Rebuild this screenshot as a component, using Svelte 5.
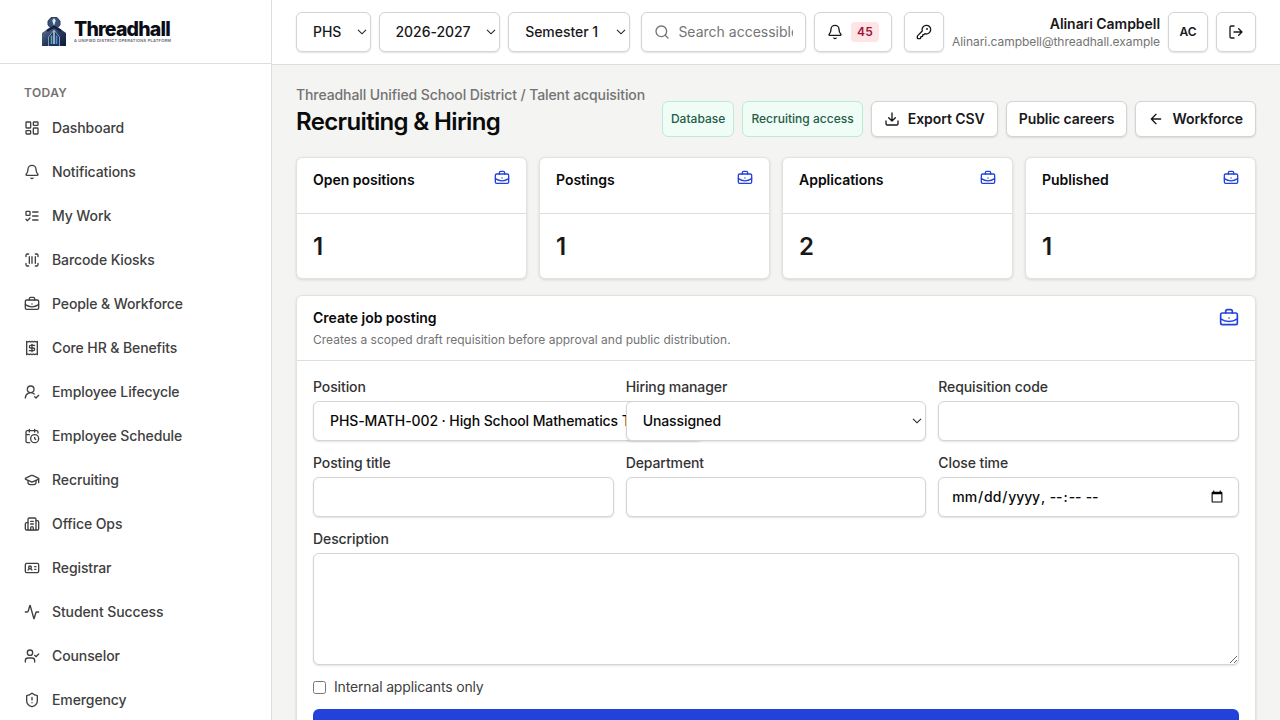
<script>
  const icons = {
    dashboard: '<rect width="7" height="9" x="3" y="3" rx="1"/><rect width="7" height="5" x="14" y="3" rx="1"/><rect width="7" height="9" x="14" y="12" rx="1"/><rect width="7" height="5" x="3" y="16" rx="1"/>',
    bell: '<path d="M10.268 21a2 2 0 0 0 3.464 0"/><path d="M3.262 15.326A1 1 0 0 0 4 17h16a1 1 0 0 0 .74-1.673C19.41 13.956 18 12.499 18 8A6 6 0 0 0 6 8c0 4.499-1.411 5.956-2.738 7.326"/>',
    todo: '<rect x="3" y="5" width="6" height="6" rx="1"/><path d="m3 17 2 2 4-4M13 6h8M13 12h8M13 18h8"/>',
    barcode: '<path d="M3 7V5a2 2 0 0 1 2-2h2M17 3h2a2 2 0 0 1 2 2v2M21 17v2a2 2 0 0 1-2 2h-2M7 21H5a2 2 0 0 1-2-2v-2M8 7v10M12 7v10M17 7v10"/>',
    briefcase: '<path d="M12 12h.01"/><path d="M16 6V4a2 2 0 0 0-2-2h-4a2 2 0 0 0-2 2v2"/><path d="M22 13a18.15 18.15 0 0 1-20 0"/><rect width="20" height="14" x="2" y="6" rx="2"/>',
    receipt: '<path d="M4 2v20l2-1 2 1 2-1 2 1 2-1 2 1 2-1 2 1V2l-2 1-2-1-2 1-2-1-2 1-2-1-2 1Z"/><path d="M16 8h-6a2 2 0 1 0 0 4h4a2 2 0 1 1 0 4H8"/><path d="M12 17.5v-11"/>',
    userRoundCheck: '<path d="M2 21a8 8 0 0 1 13.292-6"/><circle cx="10" cy="8" r="5"/><path d="m16 19 2 2 4-4"/>',
    calendarClock: '<path d="M16 14v2.2l1.6 1M16 2v4M21 7.5V6a2 2 0 0 0-2-2H5a2 2 0 0 0-2 2v14a2 2 0 0 0 2 2h3.5M3 10h5M8 2v4"/><circle cx="16" cy="16" r="6"/>',
    graduation: '<path d="M21.42 10.922a1 1 0 0 0-.019-1.838L12.83 5.18a2 2 0 0 0-1.66 0L2.6 9.08a1 1 0 0 0 0 1.832l8.57 3.908a2 2 0 0 0 1.66 0z"/><path d="M22 10v6M6 12.5V16a6 3 0 0 0 12 0v-3.5"/>',
    building: '<path d="M10 12h4M10 8h4M14 21v-3a2 2 0 0 0-4 0v3"/><path d="M6 10H4a2 2 0 0 0-2 2v7a2 2 0 0 0 2 2h16a2 2 0 0 0 2-2V9a2 2 0 0 0-2-2h-2"/><path d="M6 21V5a2 2 0 0 1 2-2h8a2 2 0 0 1 2 2v16"/>',
    idCard: '<path d="M16 10h2M16 14h2M6.17 15a3 3 0 0 1 5.66 0"/><circle cx="9" cy="11" r="2"/><rect x="2" y="5" width="20" height="14" rx="2"/>',
    activity: '<path d="M22 12h-2.48a2 2 0 0 0-1.93 1.46l-2.35 8.36a.25.25 0 0 1-.48 0L9.24 2.18a.25.25 0 0 0-.48 0l-2.35 8.36A2 2 0 0 1 4.49 12H2"/>',
    userCheck: '<path d="m16 11 2 2 4-4"/><path d="M16 21v-2a4 4 0 0 0-4-4H6a4 4 0 0 0-4 4v2"/><circle cx="9" cy="7" r="4"/>',
    shield: '<path d="M20 13c0 5-3.5 7.5-7.66 8.95a1 1 0 0 1-.67-.01C7.5 20.5 4 18 4 13V6a1 1 0 0 1 1-1c2 0 4.5-1.2 6.24-2.72a1.17 1.17 0 0 1 1.52 0C14.51 3.81 17 5 19 5a1 1 0 0 1 1 1z"/><path d="M12 8v4M12 16h.01"/>',
    search: '<circle cx="11" cy="11" r="8"/><path d="m21 21-4.34-4.34"/>',
    key: '<path d="M2.586 17.414A2 2 0 0 0 2 18.828V21a1 1 0 0 0 1 1h3a1 1 0 0 0 1-1v-1a1 1 0 0 1 1-1h1a1 1 0 0 0 1-1v-1a1 1 0 0 1 1-1h.172a2 2 0 0 0 1.414-.586l.814-.814a6.5 6.5 0 1 0-4-4z"/><circle cx="16.5" cy="7.5" r=".5" fill="currentColor"/>',
    logout: '<path d="m16 17 5-5-5-5M21 12H9M9 21H5a2 2 0 0 1-2-2V5a2 2 0 0 1 2-2h4"/>',
    download: '<path d="M12 15V3M21 15v4a2 2 0 0 1-2 2H5a2 2 0 0 1-2-2v-4M7 10l5 5 5-5"/>',
    arrowLeft: '<path d="m12 19-7-7 7-7M19 12H5"/>'
  };

  const navItems = [
    { label: 'Dashboard', icon: 'dashboard' },
    { label: 'Notifications', icon: 'bell' },
    { label: 'My Work', icon: 'todo' },
    { label: 'Barcode Kiosks', icon: 'barcode' },
    { label: 'People & Workforce', icon: 'briefcase' },
    { label: 'Core HR & Benefits', icon: 'receipt' },
    { label: 'Employee Lifecycle', icon: 'userRoundCheck' },
    { label: 'Employee Schedule', icon: 'calendarClock' },
    { label: 'Recruiting', icon: 'graduation' },
    { label: 'Office Ops', icon: 'building' },
    { label: 'Registrar', icon: 'idCard' },
    { label: 'Student Success', icon: 'activity' },
    { label: 'Counselor', icon: 'userCheck' },
    { label: 'Emergency', icon: 'shield' }
  ];

  const stats = [
    { label: 'Open positions', value: 1 },
    { label: 'Postings', value: 1 },
    { label: 'Applications', value: 2 },
    { label: 'Published', value: 1 }
  ];

  let internalOnly = $state(false);
</script>

{#snippet icon(name, size = 16)}
  <svg class="icon" width={size} height={size} viewBox="0 0 24 24" fill="none" stroke="currentColor" stroke-width="2" stroke-linecap="round" stroke-linejoin="round" aria-hidden="true">
    {@html icons[name]}
  </svg>
{/snippet}

<div class="shell">
  <aside class="sidebar">
    <div class="brand">
      <svg class="mark" width="24" height="30" viewBox="0 0 24 30" aria-hidden="true">
        <defs>
          <linearGradient id="steel" x1="0" y1="0" x2="1" y2="1">
            <stop offset="0" stop-color="#5d7699" />
            <stop offset="0.5" stop-color="#26395e" />
            <stop offset="1" stop-color="#0f1a36" />
          </linearGradient>
        </defs>
        <path d="M0 29V16l7-5h10l7 5v13z" fill="url(#steel)" />
        <path d="M9 0.5h6l3 3.500v4l-3 3.500H9L6 8V4z" fill="#3d5175" stroke="#2a3c60" stroke-width="1" />
        <path d="M12 1l1.800 2.500L12 9l-1.800-5.500z" fill="#dfe6f1" />
        <path d="M5 14l7-4.500 7 4.500" fill="none" stroke="#15203c" stroke-width="2.200" />
        <path d="M6.500 29v-9L12 13l5.500 7v9" fill="#1b3563" stroke="#b9c7dd" stroke-width="0.7" />
        <path d="M9.500 18.500V27" stroke="#5fa89a" stroke-width="1.600" />
        <path d="M14.500 18.500V27" stroke="#4b8be0" stroke-width="1.600" />
        <path d="M12 14v13" stroke="#f2f6fc" stroke-width="1.200" />
      </svg>
      <div class="brand-text">
        <span class="brand-name">Threadhall</span>
        <span class="brand-tag">A UNIFIED DISTRICT OPERATIONS PLATFORM</span>
      </div>
    </div>
    <nav>
      <p class="nav-title">TODAY</p>
      {#each navItems as item}
        <a class="nav-item" href="#top">
          {@render icon(item.icon)}
          <span>{item.label}</span>
        </a>
      {/each}
    </nav>
  </aside>

  <div class="content">
    <header class="topbar">
      <select class="control school" aria-label="School"><option>PHS</option></select>
      <select class="control term" aria-label="Year"><option>2026-2027</option></select>
      <select class="control term" aria-label="Semester"><option>Semester 1</option></select>
      <label class="control search">
        {@render icon('search')}
        <input placeholder="Search accessible records" />
      </label>
      <button class="control alerts">
        {@render icon('bell')}
        <span class="count">45</span>
      </button>
      <button class="control square key" aria-label="Keys">{@render icon('key')}</button>
      <div class="user">
        <strong>Alinari Campbell</strong>
        <span>Alinari.campbell@threadhall.example</span>
      </div>
      <button class="control square initials">AC</button>
      <button class="control square" aria-label="Sign out">{@render icon('logout')}</button>
    </header>

    <main>
      <div class="page-head">
        <div class="titles">
          <p>Threadhall Unified School District / Talent acquisition</p>
          <h1>Recruiting &amp; Hiring</h1>
        </div>
        <div class="actions">
          <span class="badge">Database</span>
          <span class="badge">Recruiting access</span>
          <button class="btn">{@render icon('download')}Export CSV</button>
          <button class="btn">Public careers</button>
          <button class="btn">{@render icon('arrowLeft')}Workforce</button>
        </div>
      </div>

      <section class="stats">
        {#each stats as stat}
          <div class="card">
            <div class="stat-head">
              <h2>{stat.label}</h2>
              {@render icon('briefcase')}
            </div>
            <div class="stat-value">{stat.value}</div>
          </div>
        {/each}
      </section>

      <section class="card">
        <div class="card-head">
          <div>
            <h2>Create job posting</h2>
            <p>Creates a scoped draft requisition before approval and public distribution.</p>
          </div>
          {@render icon('briefcase', 20)}
        </div>
        <form>
          <div class="fields">
            <label class="field">
              Position
              <select class="control position"><option>PHS-MATH-002 · High School Mathematics Teacher</option></select>
            </label>
            <label class="field">
              Hiring manager
              <select class="control"><option>Unassigned</option></select>
            </label>
            <label class="field">
              Requisition code
              <input class="control" />
            </label>
            <label class="field">
              Posting title
              <input class="control" />
            </label>
            <label class="field">
              Department
              <input class="control" />
            </label>
            <label class="field">
              Close time
              <input class="control" type="datetime-local" />
            </label>
          </div>
          <label class="field">
            Description
            <textarea class="control"></textarea>
          </label>
          <label class="check">
            <input type="checkbox" bind:checked={internalOnly} />
            Internal applicants only
          </label>
          <button class="submit" type="button" aria-label="Create posting"></button>
        </form>
      </section>
    </main>
  </div>
</div>

<style>
  :global(body) {
    overflow: hidden;
  }
  .shell, .shell * {
    box-sizing: border-box;
  }
  .shell {
    display: flex;
    height: 720px;
    overflow: hidden;
    background: #f4f4f2;
    color: #18181b;
    font-family: Inter, "Liberation Sans", sans-serif;
    font-size: 14px;
    line-height: 20px;
    letter-spacing: -0.1px;
  }
  h1, h2, p {
    margin: 0;
  }
  button, input, select, textarea {
    font: inherit;
    color: inherit;
    letter-spacing: inherit;
  }
  .icon {
    flex-shrink: 0;
    display: block;
  }

  .sidebar {
    width: 272px;
    flex-shrink: 0;
    background: #fff;
    border-right: 1px solid #dededc;
  }
  .brand {
    display: flex;
    gap: 8px;
    height: 64px;
    padding: 17px 0 0 42px;
    border-bottom: 1px solid #dededc;
  }
  .brand-text {
    display: flex;
    flex-direction: column;
    padding-top: 3px;
  }
  .brand-name {
    font-size: 19.5px;
    font-weight: 800;
    line-height: 18px;
    letter-spacing: -0.8px;
    color: #0a0d18;
  }
  .brand-tag {
    font-size: 4px;
    line-height: 5px;
    font-weight: 600;
    letter-spacing: 0.22px;
    white-space: nowrap;
    color: #5f6470;
  }
  nav {
    padding: 21px 12px;
  }
  .nav-title {
    height: 16px;
    padding: 0 12px;
    margin-bottom: 7px;
    font-size: 12px;
    line-height: 16px;
    font-weight: 600;
    letter-spacing: 0.4px;
    color: #737373;
  }
  .nav-item {
    display: flex;
    align-items: center;
    gap: 12px;
    height: 40px;
    margin-bottom: 4px;
    padding: 0 12px;
    font-weight: 500;
    color: #404040;
    text-decoration: none;
  }

  .content {
    flex: 1;
    min-width: 0;
  }
  .topbar {
    display: flex;
    align-items: center;
    height: 65px;
    padding: 0 24px;
    gap: 8px;
    background: #fff;
    border-bottom: 1px solid #dededc;
  }
  .control {
    height: 40px;
    padding: 0 12px;
    border: 1px solid #d4d4d4;
    border-radius: 6px;
    background-color: #fff;
    box-shadow: 0 1px 2px rgba(0, 0, 0, 0.12);
    font-weight: 500;
    flex-shrink: 0;
  }
  select.control {
    appearance: none;
    padding: 0 16px;
    background-image: url("data:image/svg+xml,%3Csvg xmlns='http://www.w3.org/2000/svg' width='10' height='6' fill='none' stroke='%23222' stroke-width='1.1'%3E%3Cpath d='M1 .8l4 4 4-4'/%3E%3C/svg%3E");
    background-repeat: no-repeat;
    background-position: right 3px center;
  }
  .school {
    width: 74.5px;
  }
  .term {
    width: 121.7px;
    letter-spacing: -0.05px;
  }
  .search {
    display: flex;
    align-items: center;
    gap: 8px;
    width: 164.5px;
    margin-left: 3.5px;
    color: #737373;
    letter-spacing: 0;
  }
  .search input {
    width: 100%;
    min-width: 0;
    padding: 0;
    border: 0;
    outline: 0;
    font-weight: 400;
    background: transparent;
  }
  .search input::placeholder {
    color: #757575;
  }
  .alerts {
    display: flex;
    align-items: center;
    gap: 8px;
    width: 78px;
  }
  .count {
    padding: 2px 6px;
    border-radius: 4px;
    background: #ffe4e6;
    color: #9f1239;
    font-size: 12px;
    line-height: 16px;
    font-weight: 600;
    letter-spacing: 0.3px;
  }
  .square {
    display: flex;
    align-items: center;
    justify-content: center;
    width: 40px;
    padding: 0;
  }
  .key {
    margin-left: 4px;
  }
  .user {
    display: flex;
    flex: 1;
    flex-direction: column;
    align-items: flex-end;
    min-width: 0;
    white-space: nowrap;
  }
  .user strong {
    font-weight: 600;
    letter-spacing: -0.05px;
  }
  .user span {
    font-size: 12px;
    line-height: 16px;
    letter-spacing: -0.05px;
    color: #737373;
  }
  .initials {
    font-size: 12px;
    font-weight: 600;
  }

  main {
    padding: 20px 24px;
  }
  .page-head {
    display: flex;
    justify-content: space-between;
    align-items: center;
    margin-bottom: 20px;
  }
  .titles p {
    color: #737373;
    font-weight: 500;
    white-space: nowrap;
  }
  h1 {
    padding-top: 1px;
    margin-bottom: -1px;
    font-size: 24px;
    line-height: 32px;
    font-weight: 600;
    letter-spacing: -0.65px;
    color: #0a0a0a;
  }
  .actions {
    display: flex;
    gap: 8px;
    padding-top: 16px;
  }
  .badge {
    display: flex;
    align-items: center;
    height: 36px;
    padding: 0 8px;
    border: 1px solid #bbebd5;
    border-radius: 6px;
    background: #effdf6;
    color: #265c47;
    font-size: 12px;
    font-weight: 500;
    letter-spacing: 0.02px;
    white-space: nowrap;
  }
  .btn {
    display: flex;
    align-items: center;
    gap: 8px;
    height: 36px;
    padding: 0 12px;
    border: 1px solid #d4d4d4;
    border-radius: 6px;
    background: #fff;
    box-shadow: 0 1px 2px rgba(0, 0, 0, 0.12);
    font-weight: 600;
    letter-spacing: -0.07px;
    white-space: nowrap;
  }

  .card {
    background: #fff;
    border: 1px solid #e2e2e0;
    border-radius: 6px;
    box-shadow: 0 1px 3px rgba(0, 0, 0, 0.12);
  }
  .card h2 {
    font-size: 14px;
    line-height: 20px;
    font-weight: 600;
    letter-spacing: -0.02px;
    color: #0a0a0a;
  }
  .stats {
    display: grid;
    grid-template-columns: repeat(4, 1fr);
    gap: 12px;
    margin-bottom: 16px;
  }
  .stat-head {
    display: flex;
    justify-content: space-between;
    height: 56px;
    padding: 12px 16px;
    border-bottom: 1px solid #dededc;
  }
  .stat-head .icon, .card-head .icon {
    color: #2342dc;
  }
  .stat-value {
    height: 64px;
    padding: 17px 16px 0;
    font-size: 24px;
    line-height: 32px;
    font-weight: 600;
  }
  .card-head {
    display: flex;
    justify-content: space-between;
    height: 65px;
    padding: 12px 16px;
    border-bottom: 1px solid #dededc;
  }
  .card-head p {
    margin-top: 4px;
    font-size: 12px;
    line-height: 16px;
    letter-spacing: 0;
    color: #737373;
  }
  form {
    display: flex;
    flex-direction: column;
    gap: 12px;
    padding: 16px;
  }
  .fields {
    display: grid;
    grid-template-columns: repeat(3, minmax(0, 1fr));
    gap: 12px;
  }
  .field {
    display: grid;
    gap: 4px;
    min-width: 0;
    font-weight: 500;
    color: #333;
  }
  .field .control {
    width: 100%;
    color: #0a0a0a;
  }
  .field .position {
    width: 390px;
  }
  .field textarea {
    display: block;
    height: 112px;
    resize: vertical;
  }
  .check {
    display: flex;
    align-items: center;
    gap: 8px;
    letter-spacing: -0.16px;
    color: #404040;
  }
  .check input {
    width: 13px;
    height: 13px;
    margin: 0;
  }
  .submit {
    height: 40px;
    border: 0;
    border-radius: 6px;
    background: #2342dc;
  }
</style>
